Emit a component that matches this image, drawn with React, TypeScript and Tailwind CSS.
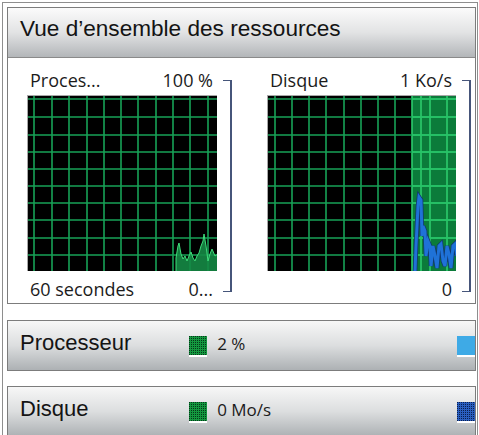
import React from 'react';

const ARIAL = { fontFamily: '"Liberation Sans", Arial, sans-serif' };
const SEGOE = { fontFamily: '"Open Sans", "Noto Sans", sans-serif' };

const ROWS = [3, 21, 39, 56, 73, 90, 107, 124, 142, 159];

function Grid({ w, cols, hot }: { w: number; cols: number[]; hot?: number }) {
  return (
    <>
      <rect x={0} y={0} width={w} height={176} fill="#000" />
      {hot !== undefined && <rect x={hot} y={0} width={w - hot} height={176} fill="#0b7b3a" />}
      {cols.map((x) => (
        <line key={'c' + x} x1={x} y1={0} x2={x} y2={176} stroke={hot !== undefined && x >= hot ? '#2ccc6c' : '#17a257'} strokeWidth={1.6} />
      ))}
      {ROWS.map((y) => (
        <line key={'r' + y} x1={0} y1={y} x2={w} y2={y} stroke="#17a257" strokeWidth={1.6} />
      ))}
      {hot !== undefined &&
        ROWS.map((y) => <line key={'h' + y} x1={hot} y1={y} x2={w} y2={y} stroke="#2ccc6c" strokeWidth={1.6} />)}
    </>
  );
}

function CpuChart() {
  const pts =
    '148,176 148,162 150,150 151,147 153,158 155,163 157,160 159,165 161,160 163,156 165,162 167,165 169,160 171,157 173,150 175,145 176,138 178,150 180,165 182,158 184,153 187,160 190,158 190,176';
  return (
    <svg width={190} height={176} className="block">
      <Grid w={190} cols={[6, 24, 41, 59, 76, 93, 110, 128, 145, 162, 180]} />
      <polygon points={pts} fill="#158a45" fillOpacity={0.9} stroke="#3fdc7a" strokeWidth={1} />
    </svg>
  );
}

function DiskChart() {
  const pts =
    '147,176 148,150 150,110 151,101 153,104 154,140 155,130 157,135 158,160 160,145 162,150 163,170 165,150 167,160 169,172 171,150 173,148 175,165 177,170 179,150 181,158 183,172 185,150 187,148 189,160';
  return (
    <svg width={189} height={176} className="block">
      <Grid w={189} cols={[7, 24, 41, 58, 76, 93, 110, 127, 144, 153, 162, 179]} hot={144} />
      <polyline points={pts} fill="none" stroke="#12386e" strokeWidth={4.5} />
      <polyline points={pts} fill="none" stroke="#1f72d8" strokeWidth={3} />
    </svg>
  );
}

function GraphUnit({ w, label, max, left, right, children }: { w: number; label: string; max: string; left: string; right: string; children: React.ReactNode }) {
  return (
    <div className="flex items-start">
      <div className="flex flex-col" style={{ width: w }}>
        <div className="h-[30px] flex items-center justify-between pl-[3px] pr-[4px] text-[18px] leading-[18px] text-[#1b1b1b]" style={SEGOE}>
          <span>{label}</span>
          <span>{max}</span>
        </div>
        <div className="h-[176px] border-t border-l border-[#a8a8a8] overflow-hidden">{children}</div>
        <div className="h-[32px] pt-[4px] flex items-center justify-between pl-[3px] pr-[4px] text-[18px] leading-[18px] text-[#1b1b1b]" style={SEGOE}>
          <span>{left}</span>
          <span>{right}</span>
        </div>
      </div>
      <div className="ml-[6px] mt-[15px] h-[212px] w-[9px] border-t-[1.5px] border-b-[1.5px] border-r-2 border-[#46557a]" />
    </div>
  );
}

function Swatch({ kind }: { kind: 'green' | 'light' | 'navy' }) {
  const id = 'p-' + kind;
  const base = kind === 'green' ? '#14983f' : kind === 'navy' ? '#2a5fc0' : '#3eaae6';
  const dot = kind === 'green' ? '#04381a' : '#0a1f4e';
  return (
    <div className="mt-[15px] w-[18px] h-[21px] bg-white flex flex-col shrink-0">
      <svg width={18} height={19} className="block">
        <defs>
          <pattern id={id} width={2} height={2} patternUnits="userSpaceOnUse">
            <rect width={2} height={2} fill={base} />
            <rect width={1} height={1} fill={dot} />
          </pattern>
        </defs>
        <rect width={18} height={19} fill={kind === 'light' ? base : `url(#${id})`} />
      </svg>
    </div>
  );
}

function Bar({ name, value, end }: { name: string; value: string; end: 'light' | 'navy' }) {
  return (
    <div className="h-[51px] shrink-0 border border-[#7c7c7c] bg-gradient-to-b from-[#f7f7f7] via-[#dcdedf] to-[#adb1b4] flex items-start pl-[12px] overflow-hidden">
      <div className="w-[170px] mt-[11px] text-[22px] leading-[22px] text-[#141414]" style={ARIAL}>
        {name}
      </div>
      <Swatch kind="green" />
      <div className="ml-[10px] w-[241px] mt-[14px] text-[17px] leading-[17px] text-[#1b1b1b]" style={SEGOE}>
        {value}
      </div>
      <Swatch kind={end} />
    </div>
  );
}

export default function App() {
  return (
    <div className="w-[479px] h-[435px] bg-white overflow-hidden pt-[2px] pl-[2px]">
      <div className="w-[476px] h-[440px] border-l border-t border-r border-[#8e8e8e] pl-[4px] pt-[4px] pr-[1px] flex flex-col">
        <div className="border border-[#7c7c7c] bg-white shrink-0">
          <div className="h-[50px] border-b border-[#8a8a8a] bg-gradient-to-b from-[#fbfbfb] via-[#e2e3e4] to-[#b3b6b9] pl-[12px] pt-[10px] text-[22.6px] leading-[22px] text-[#141414]" style={ARIAL}>
            Vue d’ensemble des ressources
          </div>
          <div className="h-[245px] pt-[7px] pl-[19px] flex items-start">
            <GraphUnit w={190} label="Proces..." max="100 %" left="60 secondes" right="0...">
              <CpuChart />
            </GraphUnit>
            <div className="w-[35px] shrink-0" />
            <GraphUnit w={189} label="Disque" max="1 Ko/s" left="" right="0">
              <DiskChart />
            </GraphUnit>
          </div>
        </div>
        <div className="h-[16px] shrink-0" />
        <Bar name="Processeur" value="2 %" end="light" />
        <div className="h-[15px] shrink-0" />
        <Bar name="Disque" value="0 Mo/s" end="navy" />
      </div>
    </div>
  );
}
